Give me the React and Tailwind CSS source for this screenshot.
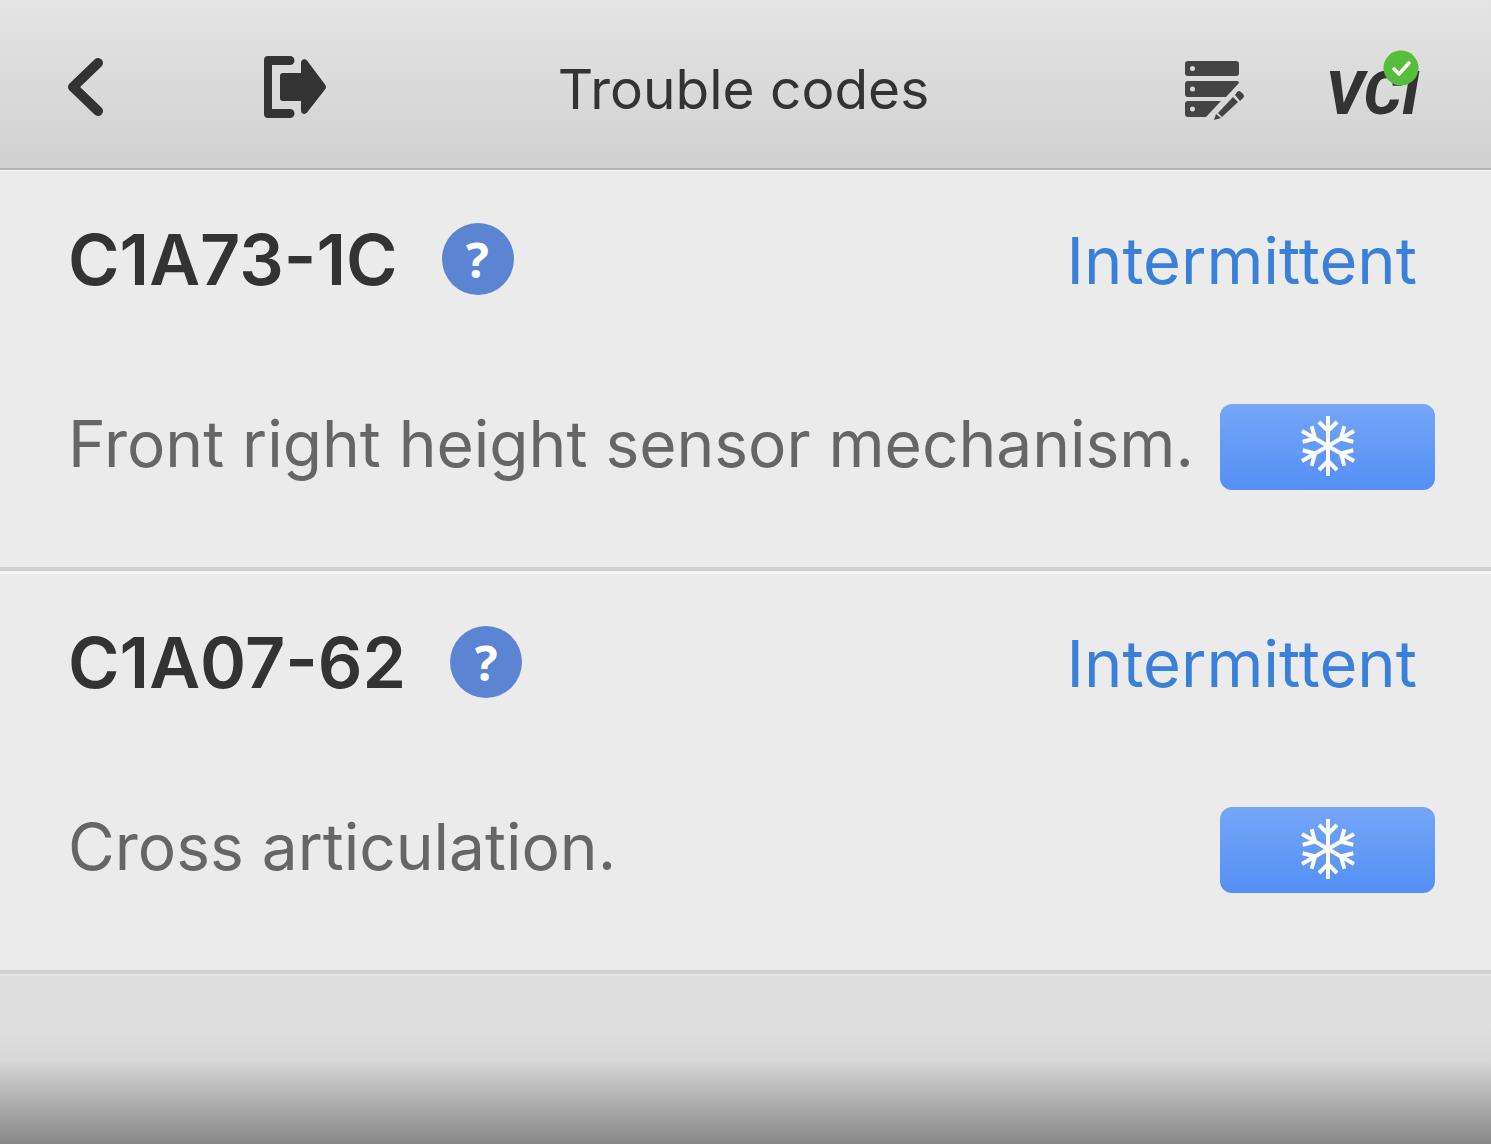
const troubleCodes = [
  { code: "C1A73-1C", status: "Intermittent", description: "Front right height sensor mechanism." },
  { code: "C1A07-62", status: "Intermittent", description: "Cross articulation." },
]

const App = () => {
  return (
    <div className="flex min-h-screen flex-col bg-[#dfdfdf] font-['Inter',sans-serif] text-[#333333]">
      <Header />
      <main className="flex grow flex-col">
        <ul>
          {troubleCodes.map((item) => (
            <TroubleCode key={item.code} item={item} />
          ))}
        </ul>
        <div className="min-h-40 grow border-t-2 border-[#e6e6e6] bg-linear-to-b from-[#dfdfdf] from-30% via-[#d8d8d8] via-50% to-[#888888]" />
      </main>
    </div>
  )
}

const Header = () => (
  <header className="grid h-[170px] grid-cols-[1fr_auto_1fr] items-center border-b-2 border-[#b3b3b3] bg-linear-to-b from-[#e4e4e4] to-[#d1d1d1] pt-2 pr-[68px] pl-16">
    <div className="flex items-center gap-[155px]">
      <button type="button" aria-label="Back">
        <BackIcon />
      </button>
      <button type="button" aria-label="Exit">
        <ExitIcon />
      </button>
    </div>
    <h1 className="pt-0.5 text-[55px] leading-[72px]">Trouble codes</h1>
    <div className="flex items-center justify-end gap-20 pr-1">
      <button type="button" aria-label="Edit records" className="pt-1">
        <RecordsIcon />
      </button>
      <button type="button" className="relative pt-3 font-['Roboto',sans-serif] text-[60px] leading-[64px] font-extrabold italic">
        VCI
        <ConnectedBadge />
      </button>
    </div>
  </header>
)

const TroubleCode = ({ item }) => (
  <li className="border-t-3 border-b-4 border-t-[#f6f6f6] border-b-[#d1d1d1] bg-[#ebebeb] pt-[52px] pr-14 pb-[77px] pl-[68px] first:border-t">
    <div className="flex h-[72px] items-center">
      <h2 className="pt-0.5 text-[70px] leading-[72px] font-semibold">{item.code}</h2>
      <button
        type="button"
        aria-label="Help"
        className="ml-11 flex size-[72px] items-center justify-center rounded-full bg-[#5b84d3] pt-0.5 font-['Open_Sans',sans-serif] text-[48px] leading-[70px] font-bold text-white"
      >
        ?
      </button>
      <span className="mr-[18px] ml-auto pt-1 text-[65px] leading-[72px] text-[#3a80d9]">{item.status}</span>
    </div>
    <div className="mt-[109px] flex items-center justify-between">
      <p className="pb-1.5 text-[64px] leading-[80px] text-[#666666]">{item.description}</p>
      <button
        type="button"
        aria-label="Freeze frame"
        className="flex h-[86px] w-[215px] shrink-0 items-center justify-center rounded-xl bg-linear-to-b from-[#75a6f7] to-[#548ff5]"
      >
        <SnowflakeIcon />
      </button>
    </div>
  </li>
)

const BackIcon = () => (
  <svg className="h-16 w-11" viewBox="0 0 44 64" fill="none" stroke="currentColor" strokeWidth="10" strokeLinecap="round" strokeLinejoin="round">
    <path d="M34 7 9 31l25 24" />
  </svg>
)

const ExitIcon = () => (
  <svg className="size-16" viewBox="0 0 64 64" fill="currentColor">
    <path d="M5 0h22a4.500 4.500 0 0 1 0 9H9v44h18a4.500 4.500 0 0 1 0 9H5a4 4 0 0 1-4-4V4a4 4 0 0 1 4-4Z" />
    <path d="M20 17h18V7c0-4 4-5 6-2.500l18 24q2 2.500 0 5l-18 23c-2 2.500-6 1.500-6-2V45H20a3 3 0 0 1-3-3V20a3 3 0 0 1 3-3Z" />
  </svg>
)

const RecordsIcon = () => (
  <svg className="h-16 w-[62px]" viewBox="0 0 62 64" fill="#444444">
    <path
      fillRule="evenodd"
      d="M4 3h48q3 0 3 3v9q0 3-3 3H4q-3 0-3-3V6q0-3 3-3Zm4.500 5a2.500 2.500 0 1 0 0 5 2.500 2.500 0 0 0 0-5ZM4 23h49q2 0 2 2L42 39H4q-3 0-3-3V26q0-3 3-3Zm4.500 5.500a2.500 2.500 0 1 0 0 5 2.500 2.500 0 0 0 0-5ZM4 43h33L22 59H4q-3 0-3-3V46q0-3 3-3Zm4.500 5.500a2.500 2.500 0 1 0 0 5 2.500 2.500 0 0 0 0-5Z"
    />
    <path d="m34 55 15-16 5 5-16 15ZM51 37l2-3q2-2 4 0l2 2q2 2 0 4l-3 3ZM32 56l5 4-7 2Z" />
  </svg>
)

const ConnectedBadge = () => (
  <svg className="absolute top-0 right-0 size-9" viewBox="0 0 36 36">
    <circle cx="18" cy="18" r="17.500" fill="#56be3a" />
    <path d="m11 19 5 5 10-11" fill="none" stroke="#fff" strokeWidth="3.500" strokeLinecap="round" strokeLinejoin="round" />
  </svg>
)

const SnowflakeIcon = () => (
  <svg className="size-16" viewBox="-32 -31 64 64" fill="none" stroke="#fff" strokeWidth="4">
    {[0, 60, 120, 180, 240, 300].map((angle) => (
      <path key={angle} transform={`rotate(${angle})`} d="M0 0V-30M-9-24 0-15l9-9" />
    ))}
  </svg>
)

export default App
